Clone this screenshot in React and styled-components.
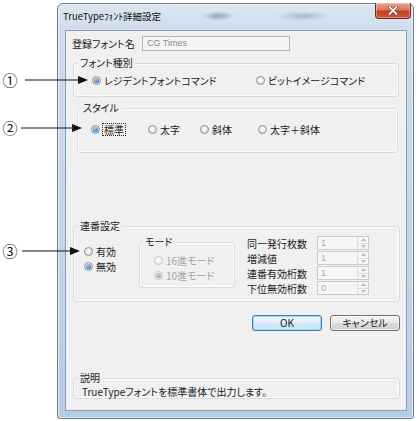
import React from "react";
import styled, { createGlobalStyle } from "styled-components";

const GlobalStyle = createGlobalStyle`
  html, body {
    margin: 0;
    padding: 0;
    background: #ffffff;
  }
  body {
    font-family: "Noto Sans CJK JP", "Noto Sans", sans-serif;
    font-size: 10px;
    font-feature-settings: "palt";
    color: #1a1a1a;
  }
`;

const Page = styled.div`
  position: relative;
  width: 420px;
  height: 421px;
  padding: 3px 0 0 57px;
  box-sizing: border-box;
  overflow: hidden;
`;

const Window = styled.div`
  width: 357px;
  height: 416px;
  box-sizing: border-box;
  border: 1px solid #6b7c90;
  border-radius: 6px 6px 3px 3px;
  display: flex;
  flex-direction: column;
  background:
    radial-gradient(ellipse 16px 5px at 160px 12px, rgba(80, 92, 105, 0.45), transparent),
    radial-gradient(ellipse 26px 5px at 245px 12px, rgba(80, 92, 105, 0.32), transparent),
    linear-gradient(180deg, #dce6f1 0px, #cfdcec 28px, #c4d6ea 55%, #b6cce5 100%);
  box-shadow: inset 0 0 0 1px rgba(255, 255, 255, 0.55);
`;

const TitleBar = styled.div`
  height: 26px;
  display: flex;
  justify-content: space-between;
  align-items: flex-start;
`;

const TitleText = styled.span`
  margin: 5px 0 0 5px;
  font-size: 9.5px;
  line-height: 14px;
  color: #101010;
  font-feature-settings: normal;
`;

const CloseButton = styled.div`
  width: 36px;
  height: 16px;
  margin: -1px 2px 0 0;
  box-sizing: border-box;
  border: 1px solid #6e2b1e;
  border-top: none;
  border-radius: 0 0 4px 4px;
  background: linear-gradient(180deg, #e9a795 0%, #d9735c 45%, #c4432a 55%, #c9553a 100%);
  box-shadow: inset 0 0 0 1px rgba(255, 210, 200, 0.45);
  display: flex;
  align-items: center;
  justify-content: center;
`;

const Client = styled.div`
  flex: 1;
  margin: 0 6px 7px 7px;
  border: 1px solid #8ba0b8;
  background: #f0f0f0;
  display: flex;
  flex-direction: column;
`;

const NameRow = styled.div`
  display: flex;
  align-items: center;
  height: 15px;
  margin: 5px 0 0 6px;
`;

const NameLabel = styled.span`
  width: 70px;
`;

const TextBox = styled.div`
  width: 148px;
  height: 15px;
  box-sizing: border-box;
  border: 1px solid #b5b9be;
  background: #f4f4f4;
  color: #8c8c8c;
  padding-left: 4px;
  font-family: "Liberation Sans", "Noto Sans", sans-serif;
  font-size: 9px;
  line-height: 13px;
`;

const GroupBox = styled.div`
  border: 1px solid #d3dce3;
  border-radius: 3px;
  box-shadow: inset 0 0 0 1px rgba(255, 255, 255, 0.7);
  margin: ${(p) => p.$mt}px ${(p) => p.$mr || 0}px 0 ${(p) => p.$ml || 0}px;
  padding-bottom: ${(p) => p.$pb}px;
  width: ${(p) => (p.$w ? `${p.$w}px` : "auto")};
  flex-shrink: 0;
`;

const Legend = styled.span`
  display: block;
  width: fit-content;
  height: 12px;
  line-height: 12px;
  margin: -7px 0 0 ${(p) => p.$x}px;
  padding: 0 2px;
  background: #f0f0f0;
`;

const RadioRow = styled.div`
  display: flex;
  align-items: center;
  height: 14px;
  margin-top: ${(p) => p.$mt || 0}px;
  padding-left: ${(p) => p.$pl || 0}px;
`;

const RadioItem = styled.label`
  display: flex;
  align-items: center;
  width: ${(p) => (p.$w ? `${p.$w}px` : "auto")};
  height: ${(p) => p.$h || 14}px;
  color: ${(p) => (p.$disabled ? "#a3a3a3" : "#1a1a1a")};
  flex-shrink: 0;
`;

const RadioDot = styled.span`
  width: 9px;
  height: 9px;
  box-sizing: border-box;
  border-radius: 50%;
  border: 1px solid ${(p) => (p.$disabled ? "#c6c6c6" : "#8e8e8e")};
  background: ${(p) =>
    p.$disabled
      ? "radial-gradient(circle at 50% 40%, #fbfbfb 0%, #eeeeee 100%)"
      : "radial-gradient(circle at 50% 40%, #ffffff 0%, #e8e8e8 55%, #d0d0d0 100%)"};
  display: inline-flex;
  align-items: center;
  justify-content: center;
  margin-right: 3px;
  flex-shrink: 0;

  &::after {
    content: "";
    display: ${(p) => (p.$checked ? "block" : "none")};
    width: 5px;
    height: 5px;
    border-radius: 50%;
    background: ${(p) =>
      p.$disabled
        ? "radial-gradient(circle at 40% 35%, #d8d8d8, #9d9d9d 80%)"
        : "radial-gradient(circle at 40% 35%, #a8dcfb, #2d74c4 70%, #1c4f92)"};
  }
`;

const FocusText = styled.span`
  outline: 1px dotted #222;
  outline-offset: 0px;
  padding: 0 1px;
  line-height: 11px;
`;

const GroupRow = styled.div`
  display: flex;
  align-items: flex-start;
`;

const LeftCol = styled.div`
  width: 65px;
  box-sizing: border-box;
  padding-left: 10px;
  margin-top: 12px;
  flex-shrink: 0;
`;

const RightCol = styled.div`
  display: flex;
  flex-direction: column;
  gap: 1px;
  margin: 4px 0 0 12px;
`;

const SpinRow = styled.div`
  display: flex;
  align-items: center;
  height: 14px;
`;

const SpinLabel = styled.span`
  width: 70px;
`;

const Spin = styled.div`
  width: 52px;
  height: 14px;
  box-sizing: border-box;
  border: 1px solid #c9cdd2;
  background: #f6f6f6;
  display: flex;
`;

const SpinValue = styled.span`
  flex: 1;
  padding-left: 3px;
  color: #a8a8a8;
  font-family: "Liberation Sans", sans-serif;
  font-size: 9px;
  line-height: 12px;
`;

const SpinButtons = styled.div`
  width: 10px;
  display: flex;
  flex-direction: column;
  border-left: 1px solid #dcdfe2;
`;

const SpinArrow = styled.span`
  flex: 1;
  display: flex;
  align-items: center;
  justify-content: center;
  & + & {
    border-top: 1px solid #dcdfe2;
  }
`;

const ButtonRow = styled.div`
  display: flex;
  justify-content: flex-end;
  gap: 8px;
  margin-top: 13px;
  padding-right: 6px;
`;

const Button = styled.div`
  width: 70px;
  height: 16px;
  box-sizing: border-box;
  border-radius: 3px;
  border: 1px solid ${(p) => (p.$default ? "#3c7fb1" : "#707070")};
  background: ${(p) =>
    p.$default
      ? "linear-gradient(180deg, #eef6fc 0%, #e3eff9 50%, #d3e7f6 51%, #cde3f4 100%)"
      : "linear-gradient(180deg, #f2f2f2 0%, #ebebeb 50%, #dddddd 51%, #cfcfcf 100%)"};
  box-shadow: ${(p) =>
    p.$default ? "inset 0 0 0 1px #9fd6f4" : "inset 0 0 0 1px rgba(255,255,255,0.6)"};
  display: flex;
  align-items: center;
  justify-content: center;
  line-height: 12px;
`;

const Description = styled.div`
  margin-top: 2px;
  padding-left: 8px;
  line-height: 12px;
  height: 12px;
`;

const Callout = styled.div`
  position: absolute;
  left: 0;
  top: ${(p) => p.$y - 8}px;
  height: 16px;
  display: flex;
  align-items: center;
`;

const CalloutNum = styled.span`
  width: 20px;
  text-align: center;
  font-size: 15px;
  line-height: 16px;
  color: #111;
`;

function Arrow({ from, to }) {
  const w = to - 20;
  const start = from - 20;
  return (
    <svg width={w} height="10" viewBox={`0 0 ${w} 10`}>
      <line x1={start} y1="5" x2={w - 9} y2="5" stroke="#111" strokeWidth="1" />
      <polygon points={`${w - 10},1 ${w},5 ${w - 10},9`} fill="#111" />
    </svg>
  );
}

function Radio({ label, checked, disabled, width, focus }) {
  return (
    <RadioItem $w={width} $disabled={disabled}>
      <RadioDot $checked={checked} $disabled={disabled} />
      {focus ? <FocusText>{label}</FocusText> : label}
    </RadioItem>
  );
}

function SpinBox({ value }) {
  return (
    <Spin>
      <SpinValue>{value}</SpinValue>
      <SpinButtons>
        <SpinArrow>
          <svg width="5" height="3" viewBox="0 0 5 3">
            <polygon points="0,3 2.5,0 5,3" fill="#b9bcc0" />
          </svg>
        </SpinArrow>
        <SpinArrow>
          <svg width="5" height="3" viewBox="0 0 5 3">
            <polygon points="0,0 2.5,3 5,0" fill="#b9bcc0" />
          </svg>
        </SpinArrow>
      </SpinButtons>
    </Spin>
  );
}

const counters = [
  { label: "同一発行枚数", value: "1" },
  { label: "増減値", value: "1" },
  { label: "連番有効桁数", value: "1" },
  { label: "下位無効桁数", value: "0" },
];

export default function App() {
  return (
    <>
      <GlobalStyle />
      <Page>
        <Window>
          <TitleBar>
            <TitleText>TrueTypeﾌｫﾝﾄ詳細設定</TitleText>
            <CloseButton>
              <svg width="10" height="9" viewBox="0 0 10 9">
                <path d="M1.5 1 L8.5 8 M8.5 1 L1.5 8" stroke="#5a2216" strokeWidth="3" strokeLinecap="round" />
                <path d="M1.5 1 L8.5 8 M8.5 1 L1.5 8" stroke="#ffffff" strokeWidth="1.8" strokeLinecap="round" />
              </svg>
            </CloseButton>
          </TitleBar>

          <Client>
            <NameRow>
              <NameLabel>登録フォント名</NameLabel>
              <TextBox>CG Times</TextBox>
            </NameRow>

            <GroupBox $mt={12} $ml={7} $mr={7} $pb={9}>
              <Legend $x={4}>フォント種別</Legend>
              <RadioRow $mt={4} $pl={18}>
                <Radio label="レジデントフォントコマンド" checked width={164} />
                <Radio label="ビットイメージコマンド" />
              </RadioRow>
            </GroupBox>

            <GroupBox $mt={11} $ml={11} $mr={8} $pb={16}>
              <Legend $x={3}>スタイル</Legend>
              <RadioRow $mt={8} $pl={13}>
                <Radio label="標準" checked focus width={57} />
                <Radio label="太字" width={52} />
                <Radio label="斜体" width={58} />
                <Radio label="太字＋斜体" />
              </RadioRow>
            </GroupBox>

            <GroupBox $mt={73} $ml={7} $mr={6} $pb={6}>
              <Legend $x={4}>連番設定</Legend>
              <GroupRow>
                <LeftCol>
                  <Radio label="有効" />
                  <RadioItem $h={1} />
                  <Radio label="無効" checked />
                </LeftCol>

                <GroupBox $mt={10} $w={94} $pb={5}>
                  <Legend $x={3}>モード</Legend>
                  <RadioRow $mt={5} $pl={14}>
                    <Radio label="16進モード" disabled />
                  </RadioRow>
                  <RadioRow $mt={1} $pl={14}>
                    <Radio label="10進モード" disabled checked />
                  </RadioRow>
                </GroupBox>

                <RightCol>
                  {counters.map((c) => (
                    <SpinRow key={c.label}>
                      <SpinLabel>{c.label}</SpinLabel>
                      <SpinBox value={c.value} />
                    </SpinRow>
                  ))}
                </RightCol>
              </GroupRow>
            </GroupBox>

            <ButtonRow>
              <Button $default>OK</Button>
              <Button>キャンセル</Button>
            </ButtonRow>

            <GroupBox $mt={47} $ml={7} $mr={6} $pb={0}>
              <Legend $x={4}>説明</Legend>
              <Description>TrueTypeフォントを標準書体で出力します。</Description>
            </GroupBox>
          </Client>
        </Window>

        <Callout $y={80}>
          <CalloutNum>①</CalloutNum>
          <Arrow from={25} to={88} />
        </Callout>
        <Callout $y={128}>
          <CalloutNum>②</CalloutNum>
          <Arrow from={21} to={82} />
        </Callout>
        <Callout $y={251}>
          <CalloutNum>③</CalloutNum>
          <Arrow from={22} to={80} />
        </Callout>
      </Page>
    </>
  );
}
